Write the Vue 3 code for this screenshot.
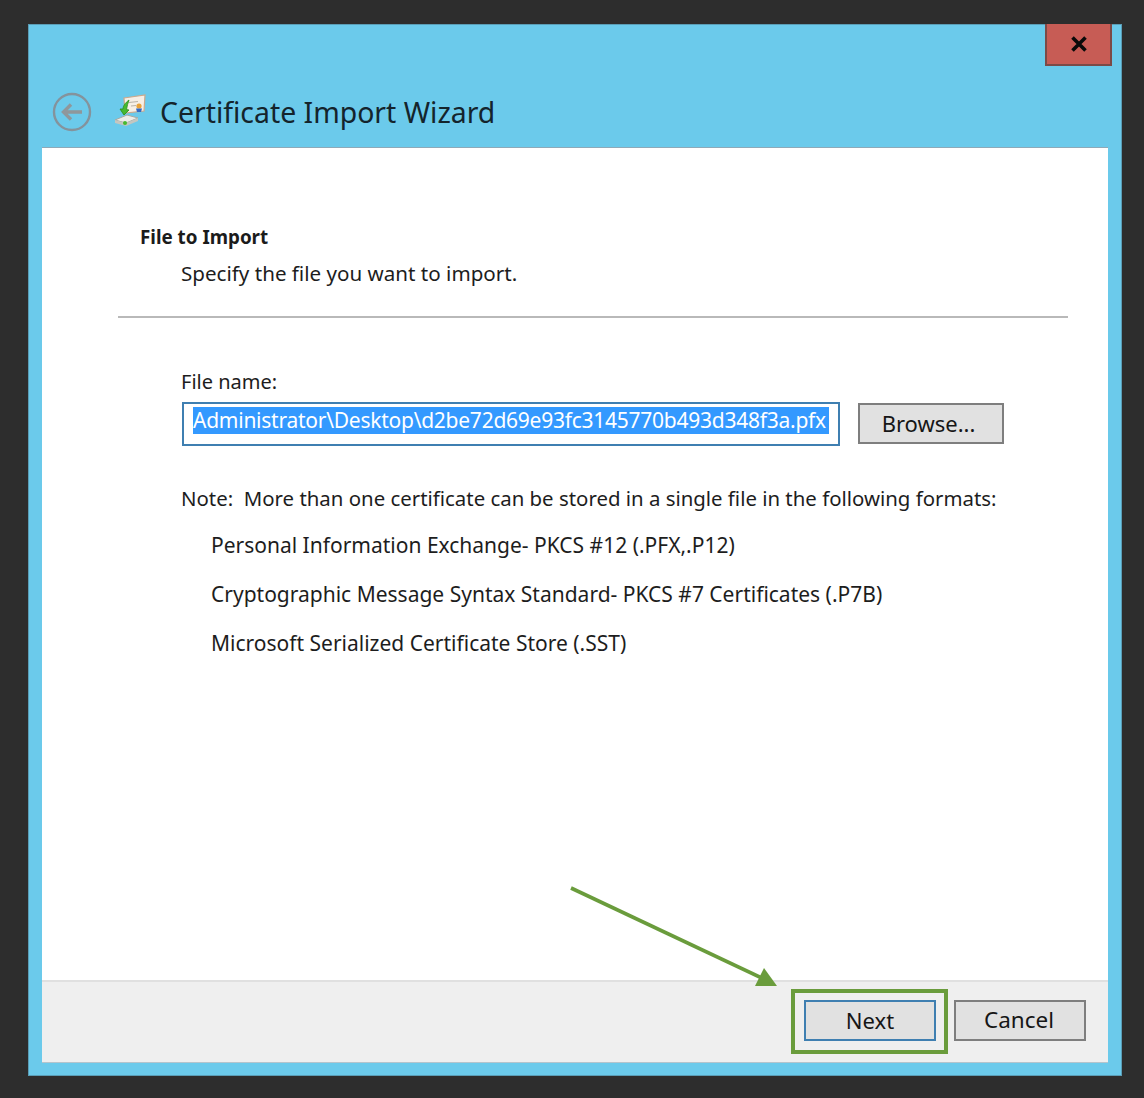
<script setup>
const formats = [
  'Personal Information Exchange- PKCS #12 (.PFX,.P12)',
  'Cryptographic Message Syntax Standard- PKCS #7 Certificates (.P7B)',
  'Microsoft Serialized Certificate Store (.SST)',
]
</script>

<template>
  <div class="screen">
    <div class="window">
      <div class="caption">
        <button class="close" aria-label="Close">
          <svg width="18" height="16" viewBox="0 0 18 16"><path d="M2.5 1.500 15.500 14.500M15.500 1.500 2.500 14.500" stroke="#0a0a0a" stroke-width="3.6" fill="none"/></svg>
        </button>
      </div>
      <header class="head">
        <svg class="back" width="40" height="40" viewBox="0 0 40 40">
          <circle cx="20" cy="20" r="18" fill="none" stroke="#84939c" stroke-width="2.4"/>
          <path d="M30 20H12M19 12.500 11.500 20 19 27.500" fill="none" stroke="#8f979b" stroke-width="3.4"/>
        </svg>
        <svg class="cert" width="34" height="34" viewBox="0 0 34 34">
          <path d="M10 4 31 1 30 17 11 19Z" fill="#f7efe6" stroke="#cda98c" stroke-width="1.200"/>
          <path d="M15 8.500 24 7.500M17 12 22 11.500" stroke="#b9b2a8" stroke-width="1.200"/>
          <circle cx="25" cy="12" r="2.600" fill="#e9a23a"/>
          <path d="M22 14.500H28L27 18H23Z" fill="#3569c4"/>
          <path d="M1 26 13 21 24 24 12 29Z" fill="#ecece8" stroke="#a9aaa2" stroke-width="1"/>
          <path d="M1 26V29L12 32 24 27V24L12 29Z" fill="#c4c6c0"/>
          <path d="M15 6C11 9 9 12 9 15L6 15 10 21 15 16 12.500 15.500C13 12 14 9 15 6Z" fill="#46b92f" stroke="#2a8e1b" stroke-width=".8"/>
          <circle cx="11" cy="29" r="2" fill="#46b92f"/>
        </svg>
        <h1 class="title">Certificate Import Wizard</h1>
      </header>
      <main class="sheet">
        <section class="body">
          <h2 class="section-title">File to Import</h2>
          <p class="section-sub">Specify the file you want to import.</p>
          <hr class="rule" />
          <div class="form">
            <label class="label">File name:</label>
            <div class="file-row">
              <div class="input"><span class="selected"><span class="selected-text">Administrator\Desktop\d2be72d69e93fc3145770b493d348f3a.pfx</span></span></div>
              <button class="btn browse">Browse...</button>
            </div>
            <p class="note">Note:&nbsp; More than one certificate can be stored in a single file in the following formats:</p>
            <ul class="formats">
              <li v-for="f in formats" :key="f">{{ f }}</li>
            </ul>
          </div>
        </section>
        <footer class="foot">
          <button class="btn next">Next</button>
          <button class="btn cancel">Cancel</button>
        </footer>
      </main>
    </div>
    <svg class="callout" width="1144" height="1098" viewBox="0 0 1144 1098">
      <path d="M571 888 764 979" stroke="#6a9c3c" stroke-width="3.600" fill="none"/>
      <path d="M755 986 777 986 764 968Z" fill="#6a9c3c"/>
      <rect x="793" y="991" width="153" height="61" fill="none" stroke="#6a9c3c" stroke-width="4"/>
    </svg>
  </div>
</template>

<style>
html, body { margin: 0; background: #2d2d2d; }
</style>

<style scoped>
.screen {
  position: relative;
  box-sizing: border-box;
  width: 1144px;
  height: 1098px;
  padding: 24px 22px 22px 28px;
  background: #2d2d2d;
  font-family: "Noto Sans", "Open Sans", sans-serif;
  color: #1d1d1d;
  overflow: hidden;
}
.callout { position: absolute; left: 0; top: 0; pointer-events: none; }
.window {
  box-sizing: border-box;
  height: 1052px;
  display: flex;
  flex-direction: column;
  padding: 0 14px 14px;
  background: #6bcaeb;
  box-shadow: inset 0 0 0 1px #5a9db6;
}
.caption { height: 42px; display: flex; justify-content: flex-end; margin-right: -3px; }
.close {
  box-sizing: border-box;
  width: 67px;
  height: 42px;
  margin-right: -1px;
  padding: 0;
  display: flex;
  align-items: center;
  justify-content: center;
  background: #c75c55;
  border: 2px solid #7c4a47;
  border-top: 0;
}
.head { height: 82px; display: flex; align-items: center; padding: 10px 0 0 10px; box-sizing: border-box; }
.back { flex: none; }
.cert { flex: none; margin: -2px 0 0 22px; }
.title { margin: -1px 0 0 12px; font-size: 28.400px; font-weight: 400; color: #14242c; white-space: nowrap; }
.sheet {
  flex: 1;
  display: flex;
  flex-direction: column;
  background: #fff;
  box-shadow: 0 -1px 0 #8ea9b8, 0 1px 0 #b5c4cc;
}
.body { flex: 1; padding: 77px 40px 0 76px; }
.section-title { margin: 0 0 0 22px; font-size: 18.800px; line-height: 24px; font-weight: 700; color: #1b1b1b; }
.section-sub { margin: 12px 0 0 63px; font-size: 20.600px; line-height: 24px; }
.rule { margin: 31px 0 0; height: 2px; border: 0; background: #b9b9b9; }
.form { padding-left: 63px; }
.label { display: block; margin-top: 52px; font-size: 20px; line-height: 24px; }
.file-row { display: flex; align-items: flex-start; margin-top: 8px; }
.input {
  box-sizing: border-box;
  width: 658px;
  height: 44px;
  margin-left: 1px;
  padding: 3px 9px 0;
  border: 2px solid #3f7fb1;
  background: #fff;
}
.selected {
  display: block;
  height: 27px;
  overflow: hidden;
  background: #3399ff;
  color: #fff;
  font-size: 21px;
  line-height: 27px;
  white-space: nowrap;
}
.selected-text { display: inline-block; letter-spacing: -0.25px; }
.btn {
  box-sizing: border-box;
  padding: 0;
  font-family: inherit;
  font-size: 22px;
  color: #161616;
  background: #e1e1e1;
  border: 2px solid #7e7e7e;
}
.browse { width: 146px; height: 41px; margin: 1px 0 0 18px; padding-right: 5px; padding-bottom: 2px; }
.note { margin: 39px 0 0; font-size: 20.400px; line-height: 26px; white-space: nowrap; }
.formats { list-style: none; margin: 21px 0 0 30px; padding: 0; font-size: 21px; }
.formats li { height: 49px; line-height: 26px; white-space: nowrap; }
.foot {
  height: 82px;
  box-sizing: border-box;
  display: flex;
  justify-content: flex-end;
  align-items: flex-start;
  gap: 18px;
  padding: 18px 22px 0 0;
  background: #efefef;
  border-top: 2px solid #e0e0e0;
}
.foot .btn { width: 132px; height: 41px; padding-bottom: 2px; }
.cancel { font-size: 22.500px; padding-right: 2px; }
.next { border-color: #3f7fb1; }
</style>
